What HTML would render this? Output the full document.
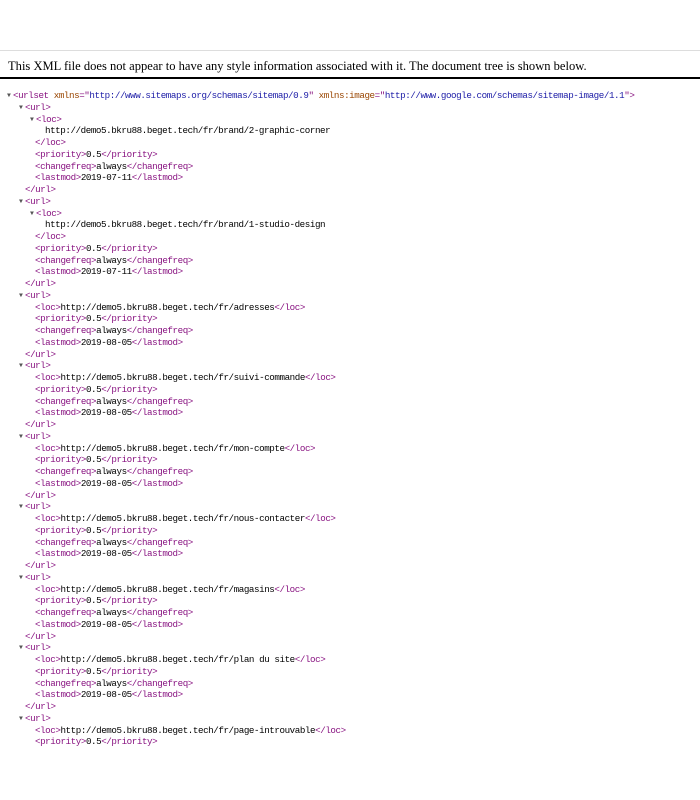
<!DOCTYPE html>
<html><head><meta charset="utf-8"><style>
body{margin:0;background:#fff;width:700px;height:800px;overflow:hidden;position:relative}
.top{position:absolute;left:0;right:0;top:50px;border-top:1px solid #ddd}
.hdr{position:absolute;left:8px;top:59px;font:12.55px "Liberation Serif",serif;color:#000;white-space:nowrap}
.rule{position:absolute;left:0;right:0;top:77px;border-top:2px solid #000}
#t{position:absolute;top:90px;left:0;font:9.2px/11.75px "Liberation Mono",monospace;letter-spacing:-0.42px;white-space:pre;color:#000}
#t div{height:11.75px;position:relative}
.g{color:#881280}.a{color:#994500}.v{color:#1a1aa6}
.ar{position:absolute;color:#555;font-size:6.5px;top:0;letter-spacing:0}
</style></head><body>
<div class="top"></div>
<div class="hdr">This XML file does not appear to have any style information associated with it. The document tree is shown below.</div>
<div class="rule"></div>
<div id="t"></div>
<script>
var L=[];
function ln(x,h,arrow){L.push('<div style="padding-left:'+x+'px">'+(arrow?'<span class="ar" style="left:'+(x-6)+'px">▼</span>':'')+h+'</div>');}
function tg(s){return '<span class="g">'+s.replace(/</g,'&lt;').replace(/>/g,'&gt;')+'</span>';}
ln(13,tg('<urlset ')+'<span class="a">xmlns</span>'+tg('="')+'<span class="v">http://www.sitemaps.org/schemas/sitemap/0.9</span>'+tg('" ')+'<span class="a">xmlns:image</span>'+tg('="')+'<span class="v">http://www.google.com/schemas/sitemap-image/1.1</span>'+tg('">'),1);
function tail(d){ln(35,tg('<priority>')+'0.5'+tg('</priority>'));ln(35,tg('<changefreq>')+'always'+tg('</changefreq>'));ln(35,tg('<lastmod>')+d+tg('</lastmod>'));ln(25,tg('</url>'));}
['2-graphic-corner','1-studio-design'].forEach(function(b){ln(25,tg('<url>'),1);ln(36,tg('<loc>'),1);ln(45,'http://demo5.bkru88.beget.tech/fr/brand/'+b);ln(35,tg('</loc>'));tail('2019-07-11');});
['adresses','suivi-commande','mon-compte','nous-contacter','magasins','plan du site'].forEach(function(p){ln(25,tg('<url>'),1);ln(35,tg('<loc>')+'http://demo5.bkru88.beget.tech/fr/'+p+tg('</loc>'));tail('2019-08-05');});
ln(25,tg('<url>'),1);ln(35,tg('<loc>')+'http://demo5.bkru88.beget.tech/fr/page-introuvable'+tg('</loc>'));ln(35,tg('<priority>')+'0.5'+tg('</priority>'));
document.getElementById('t').innerHTML=L.join('');
</script>
</body></html>
